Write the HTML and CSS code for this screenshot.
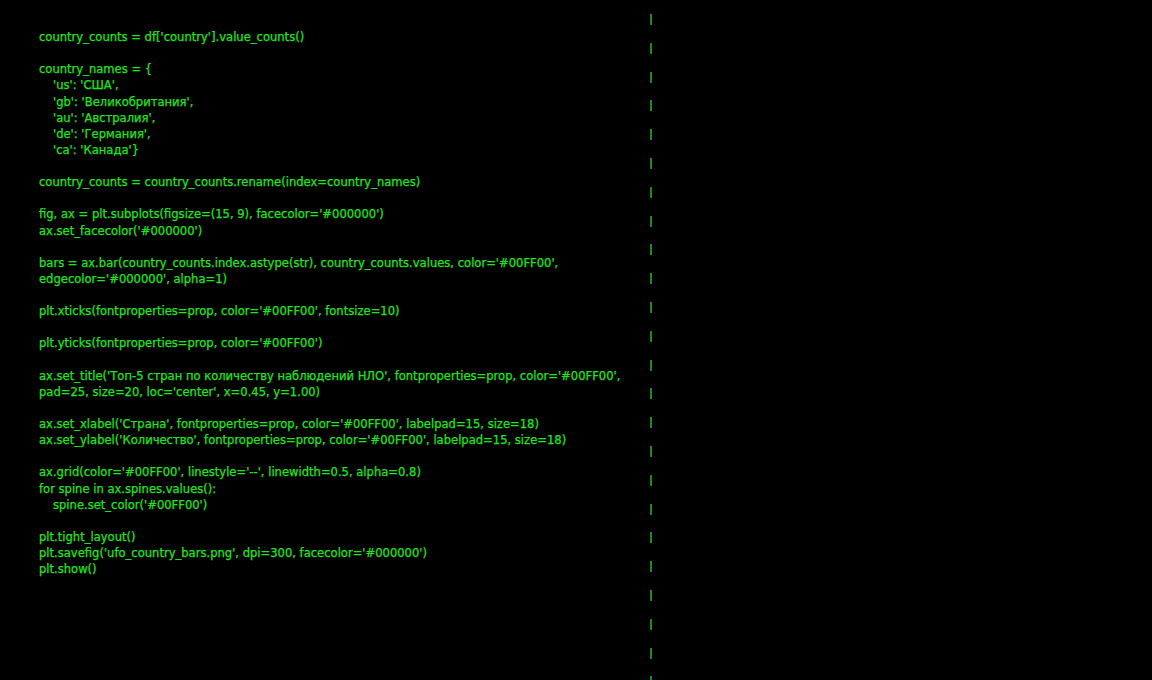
FILE: index.html
```html
<!DOCTYPE html>
<html lang="ru">
<head>
<meta charset="utf-8">
<title>UFO code</title>
<link rel="stylesheet" href="styles.css">
</head>
<body>
<div class="screen">
<pre class="code">country_counts = df['country'].value_counts()

country_names = {
<span class="ind"></span>'us': 'США',
<span class="ind"></span>'gb': 'Великобритания',
<span class="ind"></span>'au': 'Австралия',
<span class="ind"></span>'de': 'Германия',
<span class="ind"></span>'ca': 'Канада'}

country_counts = country_counts.rename(index=country_names)

fig, ax = plt.subplots(figsize=(15, 9), facecolor='#000000')
ax.set_facecolor('#000000')

bars = ax.bar(country_counts.index.astype(str), country_counts.values, color='#00FF00',
edgecolor='#000000', alpha=1)

plt.xticks(fontproperties=prop, color='#00FF00', fontsize=10)

plt.yticks(fontproperties=prop, color='#00FF00')

ax.set_title('Топ-5 стран по количеству наблюдений НЛО', fontproperties=prop, color='#00FF00',
pad=25, size=20, loc='center', x=0.45, y=1.00)

ax.set_xlabel('Страна', fontproperties=prop, color='#00FF00', labelpad=15, size=18)
ax.set_ylabel('Количество', fontproperties=prop, color='#00FF00', labelpad=15, size=18)

ax.grid(color='#00FF00', linestyle='--', linewidth=0.5, alpha=0.8)
for spine in ax.spines.values():
<span class="ind"></span>spine.set_color('#00FF00')

plt.tight_layout()
plt.savefig('ufo_country_bars.png', dpi=300, facecolor='#000000')
plt.show()</pre>
<div class="divider"></div>
</div>
</body>
</html>
```
FILE: styles.css
```css
html, body {
  margin: 0;
  padding: 0;
  background: #000;
}
.screen {
  display: flex;
  width: 1152px;
  height: 680px;
  overflow: hidden;
  background: #000;
}
.code {
  margin: 0;
  width: 611px;
  flex: none;
  padding: 29px 0 0 39px;
  font-family: "DejaVu Sans Condensed", "DejaVu Sans", sans-serif;
  font-size: 12.85px;
  line-height: 16.12px;
  color: #20e620;
  -webkit-text-stroke: 0.25px #20e620;
  white-space: pre;
}
.ind {
  display: inline-block;
  width: 14px;
}
.divider {
  flex: none;
  width: 2px;
  height: 680px;
  background: repeating-linear-gradient(to bottom, transparent 0 14px, #1f8a1f 14px 25px, transparent 25px 28.8px);
}
```
